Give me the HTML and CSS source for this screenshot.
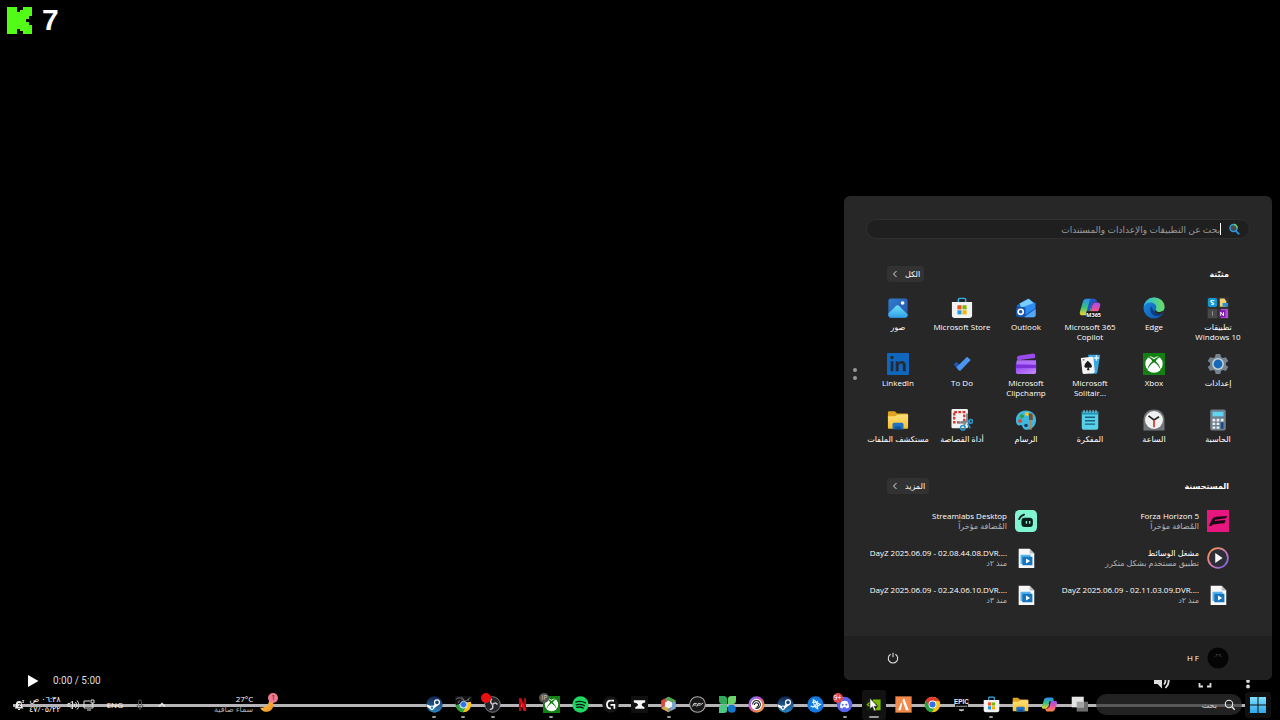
FILE: index.html
```html
<!DOCTYPE html>
<html lang="ar" dir="rtl">
<head>
<meta charset="utf-8">
<title>قائمة ابدأ</title>
<link rel="stylesheet" href="styles.css">
</head>
<body>
<svg class="defs" aria-hidden="true">
  <defs>
    <linearGradient id="gBlue" x1="0" y1="0" x2="0" y2="1"><stop offset="0" stop-color="#7fe0ff"/><stop offset="1" stop-color="#2fa8ea"/></linearGradient>
    <linearGradient id="gPhoto" x1="0" y1="0" x2="1" y2="1"><stop offset="0" stop-color="#2f7fd0"/><stop offset="1" stop-color="#2a4fa8"/></linearGradient>
    <linearGradient id="gHill" x1="0" y1="0" x2="0" y2="1"><stop offset="0" stop-color="#6fe0f8"/><stop offset="1" stop-color="#2f9fe8"/></linearGradient>
    <linearGradient id="gFolder" x1="0" y1="0" x2="0" y2="1"><stop offset="0" stop-color="#ffe07a"/><stop offset="1" stop-color="#f6c02e"/></linearGradient>
    <linearGradient id="gClip" x1="0" y1="0" x2="1" y2="1"><stop offset="0" stop-color="#8a3ff0"/><stop offset="1" stop-color="#c98bff"/></linearGradient>
    <linearGradient id="gEdge" x1="0" y1="0" x2="1" y2="0"><stop offset="0" stop-color="#2bb5e8"/><stop offset="1" stop-color="#6be05a"/></linearGradient>
    <linearGradient id="gEdge2" x1="0" y1="0" x2="1" y2="1"><stop offset="0" stop-color="#1a8fe0"/><stop offset="1" stop-color="#0f4fa8"/></linearGradient>
    <linearGradient id="gCopL" x1="0" y1="0" x2="0" y2="1"><stop offset="0" stop-color="#2b8df5"/><stop offset=".5" stop-color="#35c27a"/><stop offset="1" stop-color="#f5d22b"/></linearGradient>
    <linearGradient id="gCopR" x1="0" y1="0" x2="0" y2="1"><stop offset="0" stop-color="#9a4ff5"/><stop offset=".5" stop-color="#ec4fa0"/><stop offset="1" stop-color="#ff8a3c"/></linearGradient>
    <linearGradient id="gRing" x1="0" y1="0" x2="1" y2="1"><stop offset="0" stop-color="#ff9a3c"/><stop offset=".55" stop-color="#d07ab8"/><stop offset="1" stop-color="#6a5fe0"/></linearGradient>
    <linearGradient id="gSteam" x1="0" y1="0" x2="0" y2="1"><stop offset="0" stop-color="#10234f"/><stop offset="1" stop-color="#2a86c0"/></linearGradient>
    <linearGradient id="gUbi" x1="0" y1="0" x2="1" y2="1"><stop offset="0" stop-color="#4aa8ff"/><stop offset=".35" stop-color="#c050d8"/><stop offset=".7" stop-color="#f07a4a"/><stop offset="1" stop-color="#e8d04a"/></linearGradient>
    <linearGradient id="gMoon" x1="0" y1="0" x2="1" y2="1"><stop offset="0" stop-color="#ffd75a"/><stop offset="1" stop-color="#f08a1c"/></linearGradient>
    <symbol id="folder" viewBox="0 0 24 24"><path d="M1 4q0-1.500 1.500-1.500h6L11 5h10.500Q23 5 23 6.500V11H1z" fill="#e0a520"/><path d="M1 8h8l2.500-2H23v14.500q0 1-1 1H2q-1 0-1-1z" fill="url(#gFolder)"/><path d="M6 22v-5q0-2 2-2h8q2 0 2 2v5z" fill="#1f72c4"/><path d="M8.500 19h7v3h-7z" fill="#0f559c"/></symbol>
    <symbol id="store" viewBox="0 0 24 24"><path d="M8 6V2.800q0-1.300 1.300-1.300h5.400Q16 1.500 16 2.800V6" fill="none" stroke="#33b1ea" stroke-width="1.600"/><path d="M1 5.500h22V20q0 3-3 3H4q-3 0-3-3z" fill="#f2f2f2"/><path d="M7 9h4.500v4.500H7z" fill="#f04f23"/><path d="M12.500 9H17v4.500h-4.500z" fill="#7cb900"/><path d="M7 14.500h4.500V19H7z" fill="#1e9be8"/><path d="M12.500 14.500H17V19h-4.500z" fill="#fab400"/></symbol>
    <symbol id="chrome" viewBox="0 0 24 24"><circle cx="12" cy="12" r="11" fill="#fbc116"/><path d="M12 12 2.500 6.500A11 11 0 0 0 11 23L16.300 14.500z" fill="#27a343"/><path d="M2.500 6.500A11 11 0 0 1 21.500 7H12L7.500 14.500z" fill="#e33b2e"/><circle cx="12" cy="12" r="5.600" fill="#fff"/><circle cx="12" cy="12" r="4.300" fill="#2f73e0"/></symbol>
    <symbol id="xbox" viewBox="0 0 24 24"><path d="M0 0h24v24H0z" fill="#128012"/><circle cx="12" cy="12" r="9.500" fill="#fff"/><path d="M6.500 3.500Q9 3 12 5.500 15 3 17.500 3.500 15 1.500 12 1.500t-5.500 2zM12 7Q8 3.500 5.500 4.500 10 7 10 9 5 14 4.500 19.500 7 13 12 10.200 17 13 19.500 19.500 19 14 14 9q0-2 4.500-4.500Q16 3.500 12 7z" fill="#128012"/></symbol>
    <symbol id="steam" viewBox="0 0 24 24"><circle cx="12" cy="12" r="11.500" fill="url(#gSteam)"/><path d="M1 11.500 9 15l5-5 3 3-5 4-3.500 3L1.500 15z" fill="#fff"/><circle cx="15.500" cy="9" r="4.300" fill="#fff"/><circle cx="15.500" cy="9" r="2.500" fill="#183f73"/><circle cx="8.500" cy="16.500" r="3" fill="#fff"/><circle cx="8.500" cy="16.500" r="1.600" fill="#2370ac"/></symbol>
    <symbol id="clipfile" viewBox="0 0 24 24"><path d="M4 2h12l5 5v16H4z" fill="#f7f7f7"/><path d="M16 2v5h5z" fill="#bdbdbd"/><path d="M6 8.500h11v10H6z" fill="#55b7ee"/><path d="M8 10.500h11V20H8z" fill="#1674bd"/><path d="m12 12.500 4.500 2.700-4.500 2.800z" fill="#fff"/></symbol>
  </defs>
</svg>

<main class="screen">
  <div class="counter" dir="ltr">
    <svg class="counter-logo" viewBox="0 0 25 27" role="img" aria-label="Kick"><path d="M0 0h10v5h3V3h3V0h9v9h-3v3h-3v3h3v3h3v9h-9v-3h-3v-2h-3v5H0z" fill="#53fc18"/></svg>
    <span>7</span>
  </div>

  <div class="player" dir="ltr">
    <button class="ghost" aria-label="تشغيل"><svg class="i16" viewBox="0 0 16 16"><path d="M3 2 13.500 8 3 14z" fill="#fff"/></svg></button>
    <span class="time">0:00 / 5:00</span>
    <div class="player-right">
      <button class="ghost" aria-label="الصوت"><svg class="i18" viewBox="0 0 18 18"><path d="M1 6h3.500L9 1.500v15L4.500 12H1z" fill="#ddd"/><path d="M11 5.500q3 3.500 0 7M12.500 2q6.500 7 0 14" fill="none" stroke="#ddd" stroke-width="1.800"/></svg></button>
      <button class="ghost" aria-label="ملء الشاشة"><svg class="i18" viewBox="0 0 18 18"><path d="M3.500 7V3.500H7M11 3.500h3.500V7M14.500 11v3.500H11M7 14.500H3.500V11" fill="none" stroke="#ddd" stroke-width="1.800"/></svg></button>
      <button class="ghost" aria-label="المزيد"><svg class="i18" viewBox="0 0 18 18"><g fill="#ddd"><circle cx="9" cy="3.500" r="1.900"/><circle cx="9" cy="9" r="1.900"/><circle cx="9" cy="14.500" r="1.900"/></g></svg></button>
    </div>
  </div>

  <section class="menu" aria-label="ابدأ">
    <div class="menu-body">
      <label class="search">
        <svg class="i12" viewBox="0 0 12 12"><path d="m7.500 7.500 3.200 3.300" stroke="#1f8fd8" stroke-width="1.800" stroke-linecap="round"/><circle cx="5.500" cy="5" r="3.600" fill="#4b4b4b" stroke="#2b9be0" stroke-width="1.500"/><path d="M5.500 1.400A3.600 3.600 0 0 1 9 5" fill="none" stroke="#65c85a" stroke-width="1.500"/></svg>
        <span class="caret"></span>
        <input type="text" placeholder="بحث عن التطبيقات والإعدادات والمستندات">
      </label>

      <header class="head pinned-head">
        <h2>مثبّتة</h2>
        <button class="chip">الكل<svg class="i8" viewBox="0 0 8 8"><path d="M5.500 1 2.500 4l3 3" fill="none" stroke="#ddd"/></svg></button>
      </header>

      <div class="grid">
        <button class="app"><svg viewBox="0 0 24 24"><path d="M0 0h24v24H0z" fill="#303030"/><rect x="1" y="1" width="10" height="10" rx="2" fill="#1297d8"/><path d="M8 4.300Q6 3 4.700 4T5.500 6t2 1.500-2.700.5" fill="none" stroke="#fff" stroke-width="1.300"/><path d="M14 1.500h5l2 3v6h-7z" fill="#f1d375"/><path d="M17 6.500h6v4h-6z" fill="#2e90d8"/><path d="M1 13h10v10H1z" fill="#484848"/><path d="M6 15.500v5" stroke="#999"/><path d="M15 13h8v10h-8z" fill="#b44bd8"/><path d="M13 14.500h7V22h-7z" fill="#7719aa"/><path d="M15 20.500v-4l3 4v-4" fill="none" stroke="#fff"/></svg><span>تطبيقات Windows 10</span></button>
        <button class="app"><svg viewBox="0 0 24 24"><circle cx="12" cy="12" r="11.500" fill="url(#gEdge2)"/><path d="M.700 11C2 4 7 .500 12 .500c7 0 11.500 5 11.500 10 0 4-3 6-6 6-2.500 0-4-1-4-2 0-1 1-1 1-3.500C14.500 8 11 6 8 6c-4 0-6.500 2.500-7.300 5z" fill="url(#gEdge)"/><path d="M9.500 10C7 12 7.500 19 13.500 20.500c3.500 1 7-1 8.500-3C18 19 10.500 18 9.500 10z" fill="#0c3c82"/><path d="M14 14.500q1.500 3 6 1.200l3-.7q-1.500 3-4.500 4Q13 19 12.500 14z" fill="#282828"/></svg><span dir="ltr">Edge</span></button>
        <button class="app"><svg viewBox="0 0 24 24"><path d="M8 2h6q2 0 1.500 2L12 17q-1 3-4 3H4q-4 0-3-4L4 6q1-4 4-4z" fill="url(#gCopL)"/><path d="M14 2h2q3 0 4 3l-5 1-4 11H8l3-11q1-4 3-4z" fill="#2355c8"/><path d="M17 6h3q4 0 3 4l-3 8q-1 3-4 3H9q2 0 3-3l3-10q.500-2 2-2z" fill="url(#gCopR)"/><rect x="8" y="15.500" width="16" height="7.500" rx="1.500" fill="#151515"/><text x="16" y="21.400" class="tag">M365</text></svg><span dir="ltr">Microsoft 365 Copilot</span></button>
        <button class="app"><svg viewBox="0 0 24 24"><path d="M2 9 14 1.500 22.500 7v13q0 2-2 2H5q-2 0-2-2z" fill="#1b62cc"/><path d="M5 7 15 2l6 5-13 8z" fill="#78ccff"/><path d="m3 13 19-7v6L9 21z" fill="#2d8df0"/><path d="m10 22 12.500-9v7q0 2-2 2z" fill="#55a9f6"/><rect x="1" y="11" width="10.500" height="10.500" rx="2" fill="#1552b0"/><circle cx="6.200" cy="16.200" r="2.800" fill="none" stroke="#fff" stroke-width="1.800"/></svg><span dir="ltr">Outlook</span></button>
        <button class="app"><svg viewBox="0 0 24 24"><use href="#store"/></svg><span dir="ltr" class="one-line">Microsoft Store</span></button>
        <button class="app"><svg viewBox="0 0 24 24"><rect x="1.500" y="1.500" width="21" height="21" rx="2.500" fill="url(#gPhoto)"/><path d="m1.500 18 8-8q2-1.800 4 0l9 9v1q0 2.500-2.500 2.500H4q-2.500 0-2.500-2.500z" fill="url(#gHill)"/><circle cx="17" cy="6.500" r="2" fill="#fff"/></svg><span>صور</span></button>

        <button class="app"><svg viewBox="0 0 24 24"><path d="M9.500 1h5l.800 3.400 2 1.100 3.300-1 2.600 4.300L20.600 11v2l2.600 2.300-2.600 4.300-3.300-1-2 1.100-.8 3.300h-5l-.8-3.300-2-1.100-3.300 1-2.600-4.300L3.400 13v-2L.800 8.800l2.600-4.300 3.300 1 2-1.100z" fill="#748491"/><circle cx="12" cy="12" r="6.500" fill="#c2d0d8"/><circle cx="12" cy="12" r="4.800" fill="#1768b8"/></svg><span>إعدادات</span></button>
        <button class="app"><svg viewBox="0 0 24 24"><use href="#xbox"/></svg><span dir="ltr">Xbox</span></button>
        <button class="app"><svg viewBox="0 0 24 24"><path d="m10 2 12 0q1 0 1 1l-3 18q-.300 1.500-1.500 1.500H12z" fill="#39a5e2"/><path d="M19 2.500v6M16 5.500h6" stroke="#d8f4ff" stroke-width="1.600"/><path d="m2 5.500 12-1.500q1.500 0 1.700 1.500l1.500 15q0 1.500-1.500 1.500L5.500 23Q4 23 3.800 21.500z" fill="#f5f5f5"/><path d="M9.500 8.500q5 4 4.600 6.500-.900 2-3.600.700l1.200 3h-3l.7-3q-2.800 1.300-3.500-.7Q5.500 12.500 9.500 8.500z" fill="#1a1a1a"/><path d="M4 7.500h2" stroke="#333"/></svg><span dir="ltr">Microsoft Solitair...</span></button>
        <button class="app"><svg viewBox="0 0 24 24"><path d="M2 5.500q0-2 2-2.500l16-2.500q2 0 2 2v3L3 8z" fill="#9a4bf0"/><path d="M2 8h21v5H1z" fill="#b26cfa"/><path d="M1 12h22v9q0 2-2 2H3q-2 0-2-2z" fill="url(#gClip)"/><path d="M1 13h22v3.500H1z" fill="#7d2fd8"/></svg><span dir="ltr">Microsoft Clipchamp</span></button>
        <button class="app"><svg viewBox="0 0 24 24"><path d="m3 12.500 3-3 5.500 5.500-3 4z" fill="#2057b0"/><path d="M8.200 18.500 6 15.500 17.500 4l4 3.500L10.500 19q-1.200 1-2.300-.5z" fill="#4b94f2"/></svg><span dir="ltr">To Do</span></button>
        <button class="app"><svg viewBox="0 0 24 24"><rect width="24" height="24" rx="1" fill="#1167bd"/><circle cx="5.500" cy="5" r="1.900" fill="#222c38"/><path d="M4 9h3v11H4zM9.500 9h3v1.500Q13.500 8.700 16 8.700q4.500 0 4.500 5V20h-3.200v-6q0-2.500-2-2.500-2.600 0-2.600 3V20H9.500z" fill="#222c38"/></svg><span dir="ltr">LinkedIn</span></button>

        <button class="app"><svg viewBox="0 0 24 24"><rect x="3.500" y=".5" width="17" height="23" rx="2" fill="#6f7f8b"/><path d="M6 3h12v5H6z" fill="#5fd5f4"/><path d="M6 10.500h3v3H6zM10.500 10.500h3v3h-3zM6 15h3v2.500H6zM10.500 15h3v2.500h-3zM6 19h3v2.500H6zM10.500 19h3v2.500h-3zM15 10.500h3v3h-3z" fill="#e8eef2"/><path d="M15 14.500h3v7h-3z" fill="#134c92"/></svg><span>الحاسبة</span></button>
        <button class="app"><svg viewBox="0 0 24 24"><path d="M.500 23.500V11Q1.500.500 12 .500T23.500 11v12.500z" fill="#70757a"/><circle cx="12" cy="12" r="9.800" fill="#f0f0f0"/><path d="m6 7.500 6 4.500 5.500-3.500" fill="none" stroke="#2a2a2a" stroke-width="1.900"/><path d="M12 12v8" stroke="#d23b30" stroke-width="1.900"/></svg><span>الساعة</span></button>
        <button class="app"><svg viewBox="0 0 24 24"><path d="M3 3h18v17.500q0 2-2 2H5q-2 0-2-2z" fill="#58d0e8"/><path d="M3 3h18v3H3z" fill="#1f8fb0"/><path d="M5.500 1v3.500M8.700 1v3.500M12 1v3.500M15.300 1v3.500M18.500 1v3.500" stroke="#8be8f8"/><path d="M6.500 9h11M6.500 12.700h11M6.500 16.500h11" stroke="#13627f" stroke-width="1.600"/></svg><span>المفكرة</span></button>
        <button class="app"><svg viewBox="0 0 24 24"><path d="M12 1.500C5 1.500 1 6.500 1 12c0 6 3 6.500 5.500 5.500 2 0 1 4 5 5 6 1 11.500-4 11.500-10.500S18 1.500 12 1.500z" fill="#3fb8e0"/><circle cx="7.500" cy="8" r="2.300" fill="#2f9e46"/><circle cx="13" cy="5.500" r="2.300" fill="#f2c12e"/><circle cx="5.500" cy="13" r="2" fill="#d9432f"/><circle cx="18" cy="8" r="2" fill="#e07a28"/><circle cx="12" cy="18" r="2" fill="#1a3c64"/><path d="m15.500 6 2.500 6v10.500h-2V12z" fill="#b9854f"/><path d="M15 5h4l.500 7h-4z" fill="#685040"/></svg><span>الرسام</span></button>
        <button class="app"><svg viewBox="0 0 24 24"><rect x=".5" width="18" height="21" rx="1.500" fill="#f2f2f2"/><rect x="3.500" y="3.500" width="11" height="11" fill="none" stroke="#cf3a2c" stroke-width="2.500" stroke-dasharray="3 1.500"/><path d="M17.500 5v9M8 15l13-1.500M17.500 12l-4 7" stroke="#7b8790" stroke-width="2"/><circle cx="21.500" cy="13.500" r="2" fill="none" stroke="#2c93c8" stroke-width="1.800"/><circle cx="13" cy="20.500" r="2.500" fill="none" stroke="#2c93c8" stroke-width="1.800"/><path d="m18 16 3 5" stroke="#2c93c8" stroke-width="1.800"/></svg><span class="one-line">أداة القصاصة</span></button>
        <button class="app"><svg viewBox="0 0 24 24"><use href="#folder"/></svg><span class="one-line">مستكشف الملفات</span></button>
      </div>

      <header class="head rec-head">
        <h2>المستحسنة</h2>
        <button class="chip">المزيد<svg class="i8" viewBox="0 0 8 8"><path d="M5.500 1 2.500 4l3 3" fill="none" stroke="#ddd"/></svg></button>
      </header>

      <div class="recs">
        <button class="rec"><svg viewBox="0 0 24 24"><path d="M0 0h24v24H0z" fill="#e8177f"/><path d="M2 17.500 5.500 10Q7 7.500 10 7.300L22 6.500 20.800 9 9 10.500 8.300 12l12.200-1.200L19 14.500l-4 .3-4 .4-4.500.5L4.500 17.500z" fill="#1a0a14"/></svg><span class="txt"><bdi>Forza Horizon 5</bdi><small>المُضافة مؤخراً</small></span></button>
        <button class="rec"><svg viewBox="0 0 24 24"><rect width="24" height="24" rx="5" fill="#80f5d2"/><path d="M4.500 10Q6 6 10 5" fill="none" stroke="#0c1f1b" stroke-width="1.900" stroke-linecap="round"/><rect x="7" y="8.500" width="12.500" height="10" rx="3.500" fill="#0c1f1b"/><path d="M12.500 12v3M16 12v3" stroke="#80f5d2" stroke-width="1.500"/></svg><span class="txt"><bdi>Streamlabs Desktop</bdi><small>المُضافة مؤخراً</small></span></button>
        <button class="rec"><svg viewBox="0 0 24 24"><circle cx="12" cy="12" r="10.800" fill="#2e2e38" stroke="url(#gRing)" stroke-width="1.900"/><path d="m9 6.500 8 5.500-8 5.500z" fill="#fff"/></svg><span class="txt"><bdi>مشغل الوسائط</bdi><small>تطبيق مستخدم بشكل متكرر</small></span></button>
        <button class="rec"><svg viewBox="0 0 24 24"><use href="#clipfile"/></svg><span class="txt"><bdi dir="ltr">DayZ 2025.06.09 - 02.08.44.08.DVR....</bdi><small>منذ ٢د</small></span></button>
        <button class="rec"><svg viewBox="0 0 24 24"><use href="#clipfile"/></svg><span class="txt"><bdi dir="ltr">DayZ 2025.06.09 - 02.11.03.09.DVR....</bdi><small>منذ ٢د</small></span></button>
        <button class="rec"><svg viewBox="0 0 24 24"><use href="#clipfile"/></svg><span class="txt"><bdi dir="ltr">DayZ 2025.06.09 - 02.24.06.10.DVR....</bdi><small>منذ ٣د</small></span></button>
      </div>
      <div class="pager"><i></i><i></i></div>
    </div>
    <footer class="menu-foot">
      <button class="user"><svg viewBox="0 0 24 24"><circle cx="12" cy="12" r="11.500" fill="#050505"/><path d="M9.500 8.500h2M13 8.500h2" stroke="#555"/><path d="M7 11q5-3 10 0" stroke="#1c1c1c" fill="none"/></svg><bdi>H F</bdi></button>
      <button class="ghost" aria-label="الطاقة"><svg class="i12" viewBox="0 0 12 12"><path d="M3.600 2.300a4.700 4.700 0 1 0 4.800 0M6 .800v4.500" fill="none" stroke="#ddd" stroke-width="1.100"/></svg></button>
    </footer>
  </section>

  <nav class="taskbar" aria-label="شريط المهام">
    <div class="track"></div>
    <button class="task start" aria-label="ابدأ"><svg viewBox="0 0 20 20"><path d="M2 2h7.500v7.500H2zM10.500 2H18v7.500h-7.500zM2 10.500h7.500V18H2zM10.500 10.500H18V18h-7.500z" fill="url(#gBlue)"/></svg></button>
    <label class="task-search"><svg class="i12" viewBox="0 0 12 12"><circle cx="5" cy="5" r="3.700" fill="none" stroke="#eee" stroke-width="1.100"/><path d="m7.800 7.800 3 3" stroke="#eee" stroke-width="1.300"/></svg><input type="text" placeholder="بحث"></label>
    <div class="apps">
      <button class="task" aria-label="عرض المهام"><svg viewBox="0 0 24 24"><path d="M8 8h16v14H8z" fill="#6b6b6b"/><path d="M1 1h17v15H1z" fill="#e4e4e4"/><path d="M8 8h10v8H8z" fill="#a2a2a2"/></svg></button>
      <button class="task" aria-label="Copilot"><svg viewBox="0 0 24 24"><path d="M9 2h6q2 0 2.500 2l.5 3h-4q-2 0-2.500 2L9.500 16q-.5 2-2.500 2H4q-3.500 0-2.500-4L4 6q1-4 5-4z" fill="url(#gCopL)"/><path d="M17 7h3q3.500 0 2.500 4L20 18q-1 4-5 4H9q-2 0-2.500-2L6 18h2q2 0 2.500-2l2-7q.5-2 2.500-2z" fill="url(#gCopR)"/><path d="m12.500 8-2.300 8h1.300l2.300-8z" fill="#111"/></svg></button>
      <button class="task" aria-label="مستكشف الملفات"><svg viewBox="0 0 24 24"><use href="#folder"/></svg></button>
      <button class="task on" aria-label="Microsoft Store"><svg viewBox="0 0 24 24"><use href="#store"/></svg></button>
      <button class="task" aria-label="Epic Games"><svg viewBox="0 0 24 24"><path d="M3 1h18v18l-9 4-9-4z" fill="#050505"/><text x="12" y="11.500" class="epic">EPIC</text><path d="M4 14.500h16M8.500 19.500h7L12 21z" stroke="#ddd" fill="#ddd"/></svg></button>
      <button class="task" aria-label="Chrome"><svg viewBox="0 0 24 24"><use href="#chrome"/></svg></button>
      <button class="task" aria-label="FiveM"><svg viewBox="0 0 24 24"><path d="M.500.500h23v23H.500z" fill="#f2894a"/><path d="m4.500 20 4-11 1.500 2L8 20zM10.500 7 12 3.500h1L19.500 20h-4L11.500 9z" fill="#fff"/></svg></button>
      <button class="task active" aria-label="NVIDIA"><svg viewBox="0 0 24 24"><path d="M2 5h20v15H2z" fill="#14240a"/><path d="M11 5h11v15H11q5-1 7-6-3-6-7-6z" fill="#76b900"/><path d="M3 12.500Q7 7 14 10.500 9 17 3 12.500z" fill="none" stroke="#76b900" stroke-width="1.800"/><path d="M7 3v15l3.500-3 2.500 6 2.500-1-2.500-5.500h4.500z" fill="#fff" stroke="#222" stroke-width=".8"/></svg></button>
      <button class="task on" aria-label="Discord"><svg viewBox="0 0 24 24"><circle cx="12" cy="12" r="11" fill="#5865f2"/><path d="M8 7.500q4-1.500 8 0 2.500 4 2.500 8.500-2 1.500-3.500 1.500l-1-1.500h-4l-1 1.500Q7 17.500 5.500 16q0-4.500 2.500-8.500z" fill="#fff"/><circle cx="9.500" cy="12.500" r="1.400" fill="#5865f2"/><circle cx="14.500" cy="12.500" r="1.400" fill="#5865f2"/></svg><span class="badge red" dir="ltr">9+</span></button>
      <button class="task" aria-label="Battle.net"><svg viewBox="0 0 24 24"><circle cx="12" cy="12" r="11.500" fill="#147ae0"/><g fill="none" stroke="#d8f2ff" stroke-width="1.700"><path d="M5 14Q11 17 19 12 13 8 7 9"/><path d="M9 5.500Q16 9 15 18 9 15 9 5.500z"/><path d="M8 16q6-3 7-9"/></g></svg></button>
      <button class="task" aria-label="Steam"><svg viewBox="0 0 24 24"><use href="#steam"/></svg></button>
      <button class="task" aria-label="Ubisoft Connect"><svg viewBox="0 0 24 24"><circle cx="12" cy="12" r="11.500" fill="url(#gUbi)"/><circle cx="12" cy="12" r="8" fill="#fff"/><path d="M6.500 12A5.500 5.500 0 1 1 10.500 17.200M9 13a3 3 0 1 1 3 2.500" fill="none" stroke="#1b1b22" stroke-width="1.500"/></svg></button>
      <button class="task" aria-label="Clover"><svg viewBox="0 0 24 24"><path d="M0 0h7q4.500 0 4.500 5v6.500H5q-5 0-5-5z" fill="#2fa85a"/><path d="M24 0h-7q-4.500 0-4.500 5v6.500H19q5 0 5-5z" fill="#6bd16a"/><path d="M0 24h7q4.500 0 4.500-5v-6.500H5q-5 0-5 5z" fill="#4cc884"/><circle cx="18" cy="18" r="5.700" fill="#1676cc"/></svg></button>
      <button class="task" aria-label="FF"><svg viewBox="0 0 24 24"><circle cx="12" cy="12" r="11" fill="#161616" stroke="#a8a8a8" stroke-width="1.500"/><path d="M5 15 7 10.500h4M7 12.800h3.500M11 15l2-4.500h3.500M12.500 12.800H16l4-3" fill="none" stroke="#ddd" stroke-width="1.300"/></svg></button>
      <button class="task on" aria-label="Hexagon"><svg viewBox="0 0 24 24"><path d="m12 1 10 5.500v11L12 23 2 17.500v-11z" fill="#8b8b8b"/><path d="m12 1 10 5.500-6 3-8-6z" fill="#4ea74b"/><path d="M2 6.500 8 3.500l2 8-8 5z" fill="#dc4b3e"/><path d="m2 17.500 8-5 2 10.500z" fill="#d7a54a"/><path d="M22 8v9.500l-7 3 1-11z" fill="#74a8d0"/><path d="m12 6.500 5 2.800v5.400l-5 2.800-5-2.800V9.300z" fill="#f3f3f3"/></svg></button>
      <button class="task" aria-label="Anvil"><svg viewBox="0 0 24 24"><path d="M0 0h24v24H0z" fill="#101010"/><path d="M4 6h16v3q-4 0-5 3 0 2 4 4v2H6v-2q4-2 4-4-2-3-6-3z" fill="#f5f5f5"/></svg></button>
      <button class="task" aria-label="Logitech G"><svg viewBox="0 0 24 24"><circle cx="12" cy="12" r="11.500" fill="#151515"/><path d="M12.500 6.500h-1.500q-4 .5-4 5.500t4 5.500h1.500M12 12.500h5.500v5.500M13 6.500h4" fill="none" stroke="#fff" stroke-width="2.400"/></svg></button>
      <button class="task" aria-label="Spotify"><svg viewBox="0 0 24 24"><circle cx="12" cy="12" r="11.500" fill="#1ed760"/><path d="M5.500 8.500q7-2.200 13.500 1.300M6 12.500q6-1.800 11.500 1.200M6.700 16q5-1.400 9.300 1" fill="none" stroke="#0d1a10" stroke-width="1.900" stroke-linecap="round"/></svg></button>
      <button class="task on" aria-label="Xbox"><svg viewBox="0 0 24 24"><use href="#xbox"/></svg><span class="badge grey">IP</span></button>
      <button class="task" aria-label="Netflix"><svg viewBox="0 0 24 24"><path d="M7 3h3.300v18H7zM13.700 3H17v18h-3.300z" fill="#a80d16"/><path d="M7 3h3.300L17 21h-3.300z" fill="#e50914"/></svg></button>
      <button class="task on" aria-label="OBS"><svg viewBox="0 0 24 24"><circle cx="12" cy="12" r="11" fill="#25242a" stroke="#aaa"/><g fill="none" stroke="#c8c8c8" stroke-width="2.200"><path d="M11 4q-4 4 1 8"/><path d="M19 12q-3-4-7 0"/><path d="M8 19q6 0 4-7"/></g></svg><span class="badge dot"></span></button>
      <button class="task on" aria-label="Chrome"><svg viewBox="0 0 24 24"><use href="#chrome"/><path d="M0 0h24v8L12 9 1 13z" fill="#101014"/><path d="M1 5q5-5 9 0t9-1M4 10l3-4M9 1l4 5M21 2l-3 5" fill="none" stroke="#8b8b90" stroke-width="1.200"/><circle cx="12" cy="12" r="4.500" fill="#2f73e0" stroke="#dde8ff"/></svg></button>
      <button class="task on" aria-label="Steam"><svg viewBox="0 0 24 24"><use href="#steam"/></svg></button>
    </div>
    <div class="spacer"></div>
    <button class="weather">
      <span class="moon"><svg viewBox="0 0 16 16"><path d="M10.500 1.500A7 7 0 1 1 1 10.500Q9.500 12 10.500 1.500z" fill="url(#gMoon)"/></svg><span class="badge pink">1</span></span>
      <span class="stack"><bdi dir="ltr">27°C</bdi><span class="dim">سماء صافية</span></span>
    </button>
    <div class="tray">
      <button class="ghost" aria-label="إظهار الرموز المخفية"><svg class="i10" viewBox="0 0 10 12"><path d="M2 7.500 5 4.500l3 3" fill="none" stroke="#eee" stroke-width="1.300"/></svg></button>
      <button class="ghost" aria-label="الميكروفون"><svg class="i10" viewBox="0 0 10 12"><rect x="3.500" y="1" width="3" height="6" rx="1.500" fill="none" stroke="#555"/><path d="M2 6q0 3 3 3t3-3M5 9v2" fill="none" stroke="#555"/></svg></button>
      <button class="ghost">ENG</button>
      <div class="status">
        <div class="quick">
          <svg class="i12" viewBox="0 0 12 12"><path d="M7 2H1v7h9V6M4 11h4" fill="none" stroke="#ddd"/><path d="M8 1h3v3H8zM9.500 4v2" fill="none" stroke="#ddd"/></svg>
          <svg class="i12" viewBox="0 0 12 12"><path d="M1 4.500h2L5.500 2v8L3 7.500H1z" fill="none" stroke="#ddd"/><path d="M7 4.500q1.500 1.500 0 3M8.500 3q3 3 0 6M10 1.500q4 4.500 0 9" fill="none" stroke="#ddd"/></svg>
        </div>
        <div class="stack"><span>٠٦:٣٨ ص</span><span>٤٧/٠٥/٢٢</span></div>
        <svg class="i12" viewBox="0 0 12 12"><path d="M1.500 9.500 3 7.500V5q0-3 3-3t3 3v2.500l1.500 2z" fill="#eee"/><path d="M5 10.500h2" stroke="#eee"/><path d="M5 4.500h3L5.500 7.500H8" fill="none" stroke="#222" stroke-width=".8"/><path d="M9 1.500h2L9.500 3.500H11" fill="none" stroke="#ddd" stroke-width=".8"/></svg>
      </div>
    </div>
  </nav>
</main>
</body>
</html>
```
FILE: styles.css
```css
* { box-sizing: border-box; }

body {
  margin: 0;
  background: #000;
  color: #fff;
  font-family: "Open Sans", "Noto Sans", "DejaVu Sans", sans-serif;
  font-size: 8px;
  line-height: 10px;
}

button, input {
  font: inherit;
  color: inherit;
  background: none;
  border: 0;
  padding: 0;
  margin: 0;
}

svg { display: block; flex: none; }

.defs { position: absolute; width: 0; height: 0; }

.i8 { width: 8px; height: 8px; }
.i10 { width: 10px; height: 12px; }
.i12 { width: 12px; height: 12px; }
.i16 { width: 16px; height: 16px; }
.i18 { width: 18px; height: 18px; }

.screen {
  position: relative;
  min-height: 100vh;
  display: flex;
  flex-direction: column;
  overflow: hidden;
}

.counter {
  display: flex;
  align-items: center;
  gap: 10px;
  padding: 6px 7px;
  font: bold 30px/28px "Liberation Sans", sans-serif;
}
.counter-logo { width: 25px; height: 27px; }

/* video controls */
.player {
  display: flex;
  align-items: center;
  gap: 12px;
  margin-top: auto;
  padding: 0 23px 0 25px;
}
.time { font: 10px/14px Roboto, sans-serif; color: #ddd; }
.player-right { display: flex; gap: 25px; margin-left: auto; }

/* start menu */
.menu {
  position: absolute;
  right: 8px;
  bottom: 40px;
  width: 428px;
  border-radius: 6px;
  overflow: hidden;
  background: #272727;
}
.menu-body { position: relative; padding: 23px 22px; }

.search {
  display: flex;
  align-items: center;
  height: 20px;
  padding: 0 9px;
  border: 1px solid #303030;
  border-radius: 10px;
  background: #1f1f1f;
}
.search input {
  flex: 1;
  min-width: 0;
  height: 16px;
  font-size: 9px;
  outline: 0;
}
.search input::placeholder { color: #999; opacity: 1; }
.caret { width: 1px; height: 12px; margin-right: 7px; background: #fff; }

.head {
  display: flex;
  align-items: center;
  justify-content: space-between;
  height: 16px;
  padding: 0 21px;
}
.pinned-head { margin: 27px 0 13px; }
.rec-head { margin: 15px 0 8px; }
.head h2 { margin: 0; font-size: 8px; font-weight: bold; }
.chip {
  display: flex;
  align-items: center;
  gap: 6px;
  height: 16px;
  padding: 0 4px;
  border-radius: 3px;
  background: #323232;
}

.grid {
  display: grid;
  grid-template-columns: repeat(6, minmax(0, 1fr));
  grid-auto-rows: 56px;
}
.app {
  display: flex;
  flex-direction: column;
  align-items: center;
  gap: 3px;
  padding: 2px 3px 0;
}
.app svg { width: 22px; height: 22px; }
.app .one-line { white-space: nowrap; }
.tag { font: bold 6px "Open Sans", sans-serif; fill: #fff; text-anchor: middle; direction: ltr; }
.epic { font: bold 9px "Liberation Sans", sans-serif; fill: #eee; text-anchor: middle; direction: ltr; }

.recs {
  display: grid;
  grid-template-columns: repeat(2, minmax(0, 1fr));
  grid-auto-rows: 37px;
}
.rec {
  display: flex;
  align-items: center;
  gap: 8px;
  padding-right: 21px;
  text-align: right;
  white-space: nowrap;
}
.rec svg { width: 22px; height: 22px; }
.txt { display: flex; flex-direction: column; align-items: flex-start; }
.txt small { font-size: 8px; color: #b5b5b5; }

.pager {
  position: absolute;
  left: 9px;
  top: 172px;
  display: flex;
  flex-direction: column;
  gap: 4px;
}
.pager i { width: 4px; height: 4px; border-radius: 50%; background: #999; }

.menu-foot {
  display: flex;
  align-items: center;
  justify-content: space-between;
  height: 44px;
  padding: 0 43px;
  background: #202020;
}
.user { display: flex; align-items: center; gap: 8px; }
.user svg { width: 22px; height: 22px; }

/* taskbar */
.taskbar {
  position: relative;
  display: flex;
  align-items: center;
  height: 30px;
  padding: 0 9px 1px 13px;
}
.taskbar > * { position: relative; }
.taskbar > .track {
  position: absolute;
  left: 13px;
  right: 32px;
  top: 14px;
  height: 3px;
  background: #b8b5b8;
}
.task {
  position: relative;
  flex: none;
  display: grid;
  place-items: center;
  width: 20px;
  height: 26px;
}
.task svg { width: 17px; height: 17px; }
.start { width: 26px; border-radius: 3px; background: #101010; }
.start svg { width: 20px; height: 20px; }
.task.on::after, .task.active::after {
  content: "";
  position: absolute;
  bottom: 0;
  width: 4px;
  height: 2px;
  border-radius: 1px;
  background: #999;
}
.task.active { background: #121212; box-shadow: 0 0 0 2px #121212; border-radius: 1px; }
.task.active::after { width: 10px; }

.task-search {
  display: flex;
  align-items: center;
  gap: 7px;
  width: 146px;
  height: 21px;
  margin: 0 3px 0 7px;
  padding: 0 6px;
  border-radius: 11px;
  background: rgba(48, 48, 48, .7);
}
.task-search input { flex: 1; min-width: 0; }
.task-search input::placeholder { color: #ccc; opacity: 1; }
.apps { display: flex; justify-content: space-between; width: 665px; }
.spacer { flex: 1; }

.badge {
  position: absolute;
  top: 1px;
  left: -2px;
  height: 10px;
  min-width: 10px;
  border-radius: 5px;
  text-align: center;
  font-size: 7px;
  line-height: 10px;
}
.red { background: #e04a50; }
.grey { background: #555; color: #ccc; }
.dot { background: #e81010; }
.pink { top: -4px; left: 9px; background: #f07a90; color: #401018; }

.weather { display: flex; align-items: center; gap: 6px; margin-left: 47px; }
.moon { position: relative; }
.moon svg { width: 16px; height: 16px; }
.stack { display: flex; flex-direction: column; align-items: flex-start; white-space: nowrap; padding-bottom: 2px; }
.dim { color: #aaa; }
.tray { display: flex; align-items: center; gap: 12px; }
.status { display: flex; align-items: center; gap: 4px; }
.quick { display: flex; gap: 4px; padding-left: 2px; }
```
